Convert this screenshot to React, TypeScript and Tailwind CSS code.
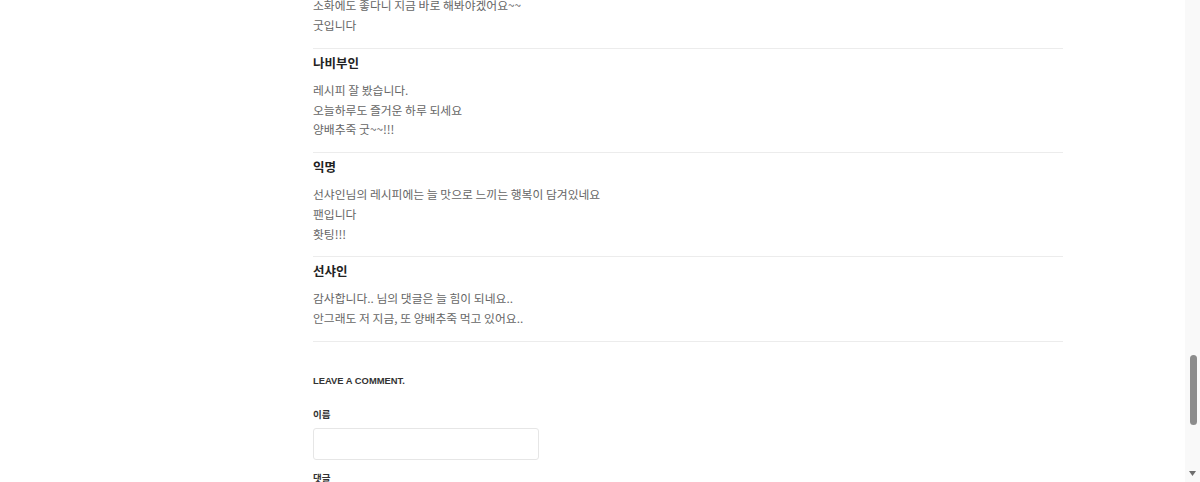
const comments = [
  { name: '나비부인', lines: ['레시피 잘 봤습니다.', '오늘하루도 즐거운 하루 되세요', '양배추죽 굿~~!!!'] },
  { name: '익명', lines: ['선샤인님의 레시피에는 늘 맛으로 느끼는 행복이 담겨있네요', '팬입니다', '홧팅!!!'] },
  { name: '선샤인', lines: ['감사합니다.. 님의 댓글은 늘 힘이 되네요..', '안그래도 저 지금, 또 양배추죽 먹고 있어요..'] },
]

const ko = { fontFamily: '"Noto Sans CJK KR", "Noto Sans", sans-serif' }

function Comment({ name, lines }: { name: string; lines: string[] }) {
  return (
    <div className="border-t border-[#ececec] pt-[4px] pb-[13px]">
      <div className="h-[20px] text-[12.5px] leading-[20px] font-bold text-[#222]">{name}</div>
      <div className="mt-[7px] text-[11.8px] leading-[19.7px] text-[#666]">
        {lines.map((l) => (
          <div key={l}>{l}</div>
        ))}
      </div>
    </div>
  )
}

export default function App() {
  return (
    <div className="flex h-[482px] w-[1200px] overflow-hidden bg-white" style={ko}>
      <main className="flex-1 overflow-hidden pl-[313px]">
        <div className="w-[750px]">
          <div className="-mt-[5px] pb-[13px] text-[11.8px] leading-[20px] text-[#666]">
            <div>소화에도 좋다니 지금 바로 해봐야겠어요~~</div>
            <div>굿입니다</div>
          </div>
          {comments.map((c) => (
            <Comment key={c.name} {...c} />
          ))}
          <div className="border-t border-[#ececec]" />
        </div>
        <div className="pt-[33px]">
          <div
            className="text-[9.4px] font-bold leading-[12px] text-[#333]"
            style={{ fontFamily: '"Liberation Sans", Arial, sans-serif' }}
          >
            LEAVE A COMMENT.
          </div>
          <div className="mt-[21px] text-[9.5px] font-bold leading-[12px] text-[#333]">이름</div>
          <div className="mt-[8px] h-[32px] w-[226px] rounded-[3px] border border-[#e6e6e6] bg-white" />
          <div className="mt-[12px] text-[9.5px] font-bold leading-[12px] text-[#333]">댓글</div>
        </div>
      </main>
      <aside className="flex w-[15px] flex-col bg-[#f9f9f9]">
        <div className="flex-1 pt-[355px] pl-[5px]">
          <div className="h-[70px] w-[7px] rounded-full bg-[#8c8c8c]" />
        </div>
        <div className="flex h-[15px] items-center justify-center pb-[3px]">
          <svg width="7" height="5" viewBox="0 0 7 5">
            <path d="M0 0h7L3.5 5z" fill="#6e6e6e" />
          </svg>
        </div>
      </aside>
    </div>
  )
}
